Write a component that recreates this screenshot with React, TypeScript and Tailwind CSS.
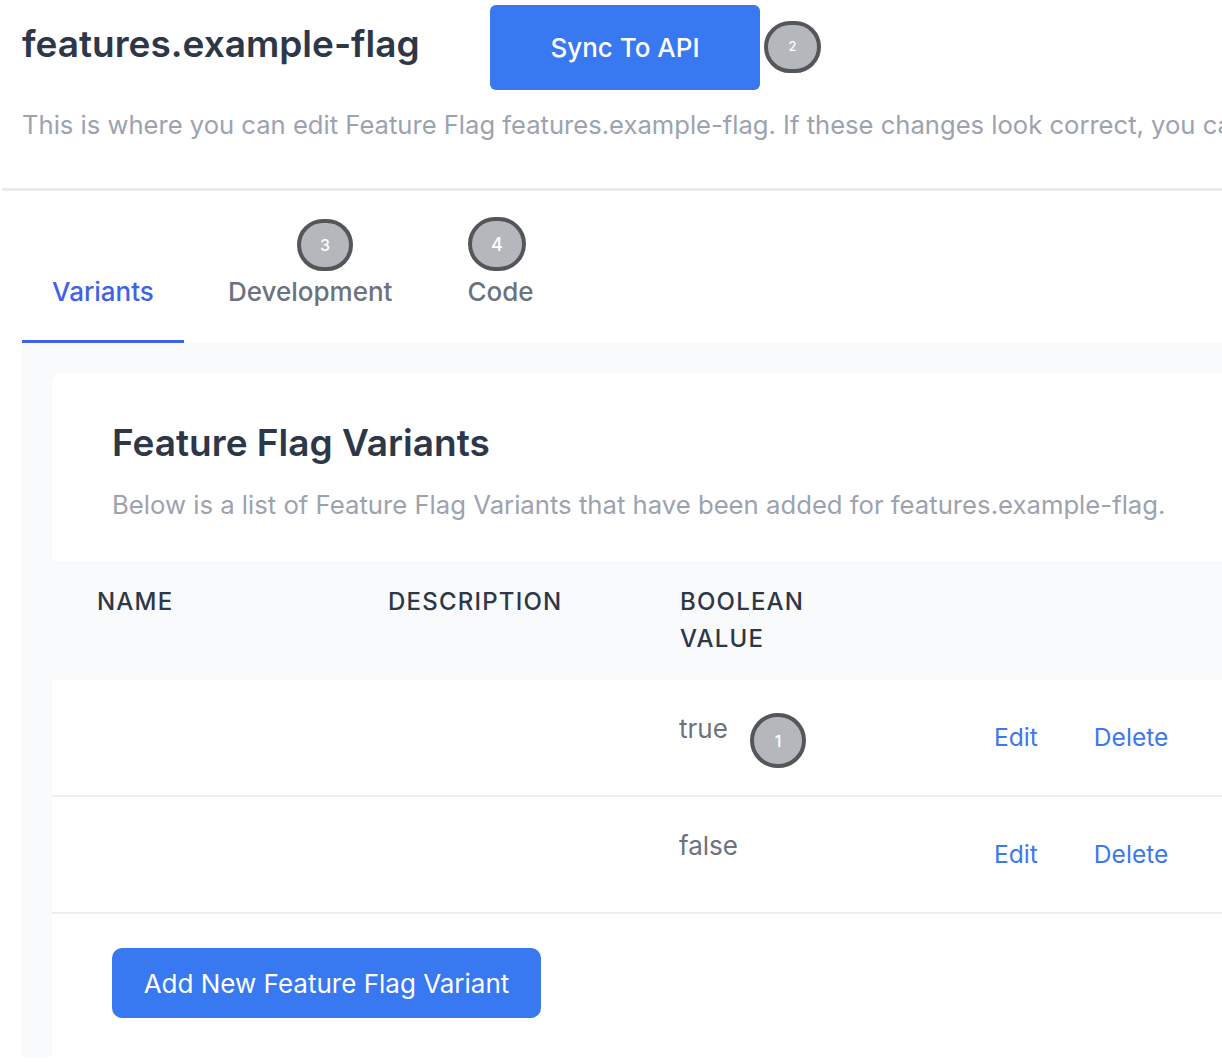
const font = "font-['Inter',sans-serif]";

function Badge({ n, className }: { n: number; className: string }) {
  return (
    <div
      className={`absolute flex items-center justify-center rounded-full border-[4px] border-[#54565a] bg-[#b4b7bb] font-medium text-white ${className}`}
    >
      {n}
    </div>
  );
}

function Row({ value }: { value: string }) {
  return (
    <div className="flex h-[117px] border-b-2 border-[#eeeef2]">
      <div className="ml-[627px] w-[315px] pt-[31px] text-[26px] leading-[36px] text-[#6b7280]">{value}</div>
      <div className="flex gap-[56px] pt-[39px] text-[24.6px] leading-[36px] text-[#3b78f0]">
        <span>Edit</span>
        <span>Delete</span>
      </div>
    </div>
  );
}

export default function App() {
  return (
    <div className={`relative h-[1062px] w-[1222px] overflow-hidden bg-white ${font}`}>
      <div className="ml-[2px] h-[191px] border-b-[3px] border-[#e9eaec] pl-[20px]">
        <div className="flex items-start pt-[5px]">
          <h1 className="w-[468px] pt-[14px] text-[37px] leading-[50px] font-semibold text-[#2d3748]">features.example-flag</h1>
          <button className="h-[85px] w-[270px] rounded-[6px] bg-[#3878f0] text-[26px] font-medium text-white">Sync To API</button>
        </div>
        <p className="mt-[16px] text-[25.6px] leading-[38px] whitespace-nowrap text-[#9ca3af]">
          This is where you can edit Feature Flag features.example-flag. If these changes look correct, you can sync them to the API.
        </p>
      </div>

      <div className="ml-[22px] flex h-[152px] items-end text-[26px] font-medium">
        <div className="flex h-[73px] w-[162px] justify-center border-b-[3px] border-[#3f63e8] pt-[4px] leading-[36px] text-[#3f63e8]">Variants</div>
        <div className="ml-[44px] h-[73px] pt-[4px] leading-[36px] text-[#6b7280]">Development</div>
        <div className="ml-[75px] h-[73px] pt-[4px] leading-[36px] text-[#6b7280]">Code</div>
      </div>

      <div className="ml-[22px] h-[714px] bg-[#f9fafb] pt-[30px] pl-[30px]">
        <div className="h-[684px] rounded-tl-[10px] bg-white">
          <div className="h-[188px] pt-[46px] pl-[60px]">
            <h2 className="text-[37px] leading-[48px] font-semibold text-[#2d3748]">Feature Flag Variants</h2>
            <p className="mt-[20px] text-[25.7px] leading-[36px] whitespace-nowrap text-[#9ca3af]">
              Below is a list of Feature Flag Variants that have been added for features.example-flag.
            </p>
          </div>
          <div className="flex h-[119px] bg-[#f9fafb] pt-[22px] pl-[45px] text-[24px] leading-[37px] font-medium tracking-[1.2px] text-[#2d3748]">
            <div className="w-[291px]">NAME</div>
            <div className="w-[292px]">DESCRIPTION</div>
            <div>
              BOOLEAN
              <br />
              VALUE
            </div>
          </div>
          <Row value="true" />
          <Row value="false" />
          <div className="pt-[34px] pl-[60px]">
            <button className="h-[70px] w-[429px] rounded-[10px] bg-[#3878f0] text-[26px] text-white">Add New Feature Flag Variant</button>
          </div>
        </div>
      </div>
      <div className="h-[5px] bg-white" />

      <Badge n={2} className="top-[21px] left-[764px] h-[52px] w-[57px] text-[13px]" />
      <Badge n={3} className="top-[219px] left-[297px] h-[52px] w-[56px] text-[16px]" />
      <Badge n={4} className="top-[217px] left-[468px] h-[54px] w-[58px] text-[18px]" />
      <Badge n={1} className="top-[713px] left-[750px] h-[55px] w-[56px] text-[16px]" />
    </div>
  );
}
